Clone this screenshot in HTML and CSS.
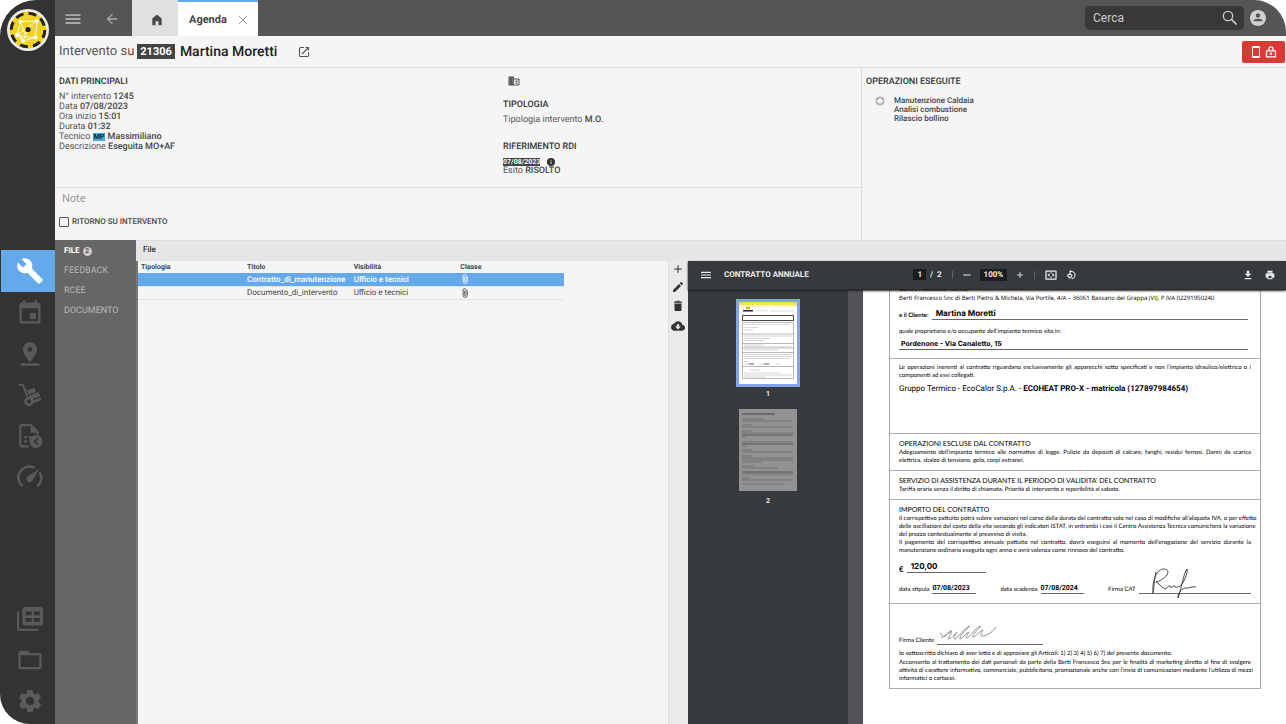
FILE: index.html
```html
<!DOCTYPE html>
<html lang="it">
<head>
<meta charset="utf-8">
<meta name="viewport" content="width=device-width, initial-scale=1">
<title>Agenda - Intervento 21306</title>
<link rel="stylesheet" href="styles.css">
</head>
<body>
<svg class="sprite" aria-hidden="true">
  <symbol id="i-wrench" viewBox="0 0 24 24"><path d="M22.7 19l-9.1-9.1c.9-2.3.4-5-1.5-6.9-2-2-5-2.4-7.4-1.3L9 6 6 9 1.6 4.7C.4 7.1.9 10.1 2.9 12.1c1.9 1.9 4.6 2.4 6.9 1.5l9.1 9.1c.4.4 1 .4 1.4 0l2.3-2.3c.5-.4.5-1.1.1-1.4z"/></symbol>
  <symbol id="i-event" viewBox="0 0 24 24"><path d="M17 12h-5v5h5v-5zM16 1v2H8V1H6v2H5c-1.11 0-1.99.9-1.99 2L3 19c0 1.1.89 2 2 2h14c1.1 0 2-.9 2-2V5c0-1.1-.9-2-2-2h-1V1h-2zm3 18H5V8h14v11z"/></symbol>
  <symbol id="i-pin" viewBox="0 0 24 24"><path d="M18 8c0-3.31-2.69-6-6-6S6 4.69 6 8c0 4.5 6 11 6 11s6-6.5 6-11zm-8 0c0-1.1.9-2 2-2s2 .9 2 2-.89 2-2 2c-1.1 0-2-.9-2-2zM4 20v2h16v-2z"/></symbol>
  <symbol id="i-trolley" viewBox="0 0 24 24"><path d="M1 2h4l4.500 12" fill="none" stroke="currentColor" stroke-width="2"/><circle cx="11" cy="18.500" r="3.400" fill="none" stroke="currentColor" stroke-width="2.500"/><path d="M9 7.500l7.300-2.700 1.500 4.200-7.300 2.700zM11.200 12.600l9.400-3.500 1.500 4.200-8 2.900c-.5-.9-1.200-1.500-2-2zM15.200 17.300l7.200-2.600.9 2.600-7.800 2.800z"/></symbol>
  <symbol id="i-doc" viewBox="0 0 24 24"><path d="M11 21.500H5a2 2 0 0 1-2-2V4a2 2 0 0 1 2-2H13l6 6v2.500" fill="none" stroke="currentColor" stroke-width="2"/><path d="M12.500 1.500l7.500 7.500h-7.500zM6.500 12h3v2h-3zM6.500 16h3v2h-3zM11 12h2v2h-2z"/><circle cx="17.500" cy="17" r="6"/><path d="M19.500 14L16 17l3.500 3" fill="none" stroke="#333" stroke-width="1.500"/></symbol>
  <symbol id="i-speed" viewBox="0 0 24 24"><path d="M4.500 20A10.300 10.300 0 0 1 15.500 3M21.300 8.500A10.300 10.300 0 0 1 19.500 20" fill="none" stroke="currentColor" stroke-width="2.300" stroke-linecap="round"/><path d="M20.500 4.500l-6 10.500a3 3 0 1 1-4-4z"/></symbol>
  <symbol id="i-tables" viewBox="0 0 24 24"><path fill-rule="evenodd" d="M7 1h15a2 2 0 0 1 2 2v13a2 2 0 0 1-2 2H7a2 2 0 0 1-2-2V3a2 2 0 0 1 2-2zm1 4v3.500h5.500V5zm7.500 0v3.500H21V5zM8 11v3.500h5.500V11zm7.500 0v3.500H21V11z"/><path d="M0 5h2v16h18v2H2a2 2 0 0 1-2-2z"/></symbol>
  <symbol id="i-folder" viewBox="0 0 24 24"><path d="M20 6h-8l-2-2H4c-1.100 0-1.990.9-1.990 2L2 18c0 1.100.9 2 2 2h16c1.100 0 2-.9 2-2V8c0-1.100-.9-2-2-2zm0 12H4V8h16v10z"/></symbol>
  <symbol id="i-gear" viewBox="0 0 24 24"><path d="M19.14 12.94c.04-.3.06-.61.06-.94 0-.32-.02-.64-.07-.94l2.030-1.580c.18-.14.23-.41.12-.61l-1.920-3.320c-.12-.22-.37-.29-.59-.22l-2.390.96c-.5-.38-1.030-.7-1.620-.94l-.36-2.540c-.04-.24-.24-.41-.48-.41h-3.840c-.24 0-.43.17-.47.41l-.36 2.540c-.59.24-1.130.57-1.620.94l-2.390-.96c-.22-.08-.47 0-.59.22L2.740 8.870c-.12.21-.08.47.12.61l2.030 1.580c-.05.3-.09.63-.09.94s.02.64.07.94l-2.030 1.580c-.18.14-.23.41-.12.61l1.920 3.320c.12.22.37.29.59.22l2.390-.96c.5.38 1.030.7 1.620.94l.36 2.540c.05.24.24.41.48.41h3.840c.24 0 .44-.17.47-.41l.36-2.540c.59-.24 1.130-.56 1.620-.94l2.390.96c.22.08.47 0 .59-.22l1.920-3.320c.12-.22.07-.47-.12-.61l-2.010-1.580zM12 15.600c-1.980 0-3.600-1.620-3.600-3.600s1.620-3.600 3.600-3.600 3.600 1.620 3.600 3.600-1.620 3.600-3.600 3.600z"/></symbol>
  <symbol id="i-menu" viewBox="0 0 24 24"><path d="M2 18.500h20v-2.500H2zm0-5.300h20v-2.400H2zM2 5.500V8h20V5.500z"/></symbol>
  <symbol id="i-back" viewBox="0 0 24 24"><path d="M20 11H7.830l5.590-5.590L12 4l-8 8 8 8 1.410-1.410L7.830 13H20z"/></symbol>
  <symbol id="i-home" viewBox="0 0 24 24"><path d="M4 20V9.500L11 3.600q1-.8 2 0l7 5.900V20q0 1-1 1h-4.500v-7h-5v7H5q-1 0-1-1z"/></symbol>
  <symbol id="i-close" viewBox="0 0 24 24"><path d="M4 4l16 16M20 4L4 20" fill="none" stroke="currentColor" stroke-width="2"/></symbol>
  <symbol id="i-search" viewBox="0 0 24 24"><path d="M14.500 14.500L22 22" fill="none" stroke="currentColor" stroke-width="2.300"/><circle cx="9" cy="9" r="7" fill="none" stroke="currentColor" stroke-width="2"/></symbol>
  <symbol id="i-user" viewBox="0 0 24 24"><path d="M12 0C5.400 0 0 5.400 0 12s5.400 12 12 12 12-5.400 12-12S18.600 0 12 0zm0 5c1.900 0 3.400 1.500 3.400 3.400S13.900 11.800 12 11.800 8.600 10.300 8.600 8.400 10.100 5 12 5zm-6.800 12v-1c0-2 4.500-3 6.800-3s6.800 1 6.800 3v1z"/></symbol>
  <symbol id="i-open" viewBox="0 0 24 24"><path d="M12 3H5a2 2 0 0 0-2 2v14a2 2 0 0 0 2 2h14a2 2 0 0 0 2-2v-7M15 3h6v6M21 3L8 16" fill="none" stroke="currentColor" stroke-width="2.200"/></symbol>
  <symbol id="i-phone" viewBox="0 0 24 24"><path fill-rule="evenodd" d="M7 0h10a3 3 0 0 1 3 3v18a3 3 0 0 1-3 3H7a3 3 0 0 1-3-3V3a3 3 0 0 1 3-3zm-1 4v16h12V4z"/></symbol>
  <symbol id="i-lock" viewBox="0 0 24 24"><path d="M3 9.500h18v12H3zM8 9V5.500a4 4 0 0 1 8 0V9" fill="none" stroke="currentColor" stroke-width="2.500" stroke-linejoin="round"/><circle cx="12" cy="15.500" r="2.500"/></symbol>
  <symbol id="i-building" viewBox="0 0 24 24"><path d="M1 3h11v18H1z"/><path d="M12 8h10v12H12" fill="none" stroke="currentColor" stroke-width="2"/><path d="M15 11h4v2.500h-4zM15 15h4v2.500h-4z"/><path d="M3 7.500h2M8 7.500h2M3 12h2M8 12h2M3 16.500h2M8 16.500h2" stroke="#bbb" stroke-width="1.500"/></symbol>
  <symbol id="i-info" viewBox="0 0 24 24"><circle cx="12" cy="12" r="12"/><path d="M10.500 10.500h3V18h-3zM10.500 5.500h3v3h-3z" fill="#ddd"/></symbol>
  <symbol id="i-target" viewBox="0 0 24 24"><circle cx="12" cy="12" r="8.500" fill="none" stroke="currentColor" stroke-width="5"/><path d="M12 0v8M12 16v8M0 12h8M16 12h8" stroke="#f5f5f5" stroke-width="1.500"/></symbol>
  <symbol id="i-clip" viewBox="0 0 24 24"><path d="M17.500 6v11.500a5 5 0 0 1-10 0V5a3.500 3.500 0 0 1 7 0v11a2 2 0 0 1-4 0V7" fill="none" stroke="currentColor" stroke-width="2"/></symbol>
  <symbol id="i-plus" viewBox="0 0 24 24"><path d="M12 3v18M3 12h18" stroke="currentColor" stroke-width="2.500"/></symbol>
  <symbol id="i-minus" viewBox="0 0 24 24"><path d="M1 12h22" stroke="currentColor" stroke-width="3"/></symbol>
  <symbol id="i-edit" viewBox="0 0 24 24"><path d="M2 18v4h4L18 10l-4-4zM21.500 6.500c.6-.6.6-1.400 0-2l-2-2c-.6-.6-1.400-.6-2 0l-2 2 4 4z"/></symbol>
  <symbol id="i-trash" viewBox="0 0 24 24"><path d="M5 20c0 1.100.9 2 2 2h10c1.100 0 2-.9 2-2V7H5zM20 3h-4.500l-1-1.500h-5L8.500 3H4v2.500h16z"/></symbol>
  <symbol id="i-cloud" viewBox="0 0 24 24"><path d="M19.350 10.040C18.670 6.590 15.640 4 12 4 9.110 4 6.600 5.640 5.350 8.040 2.340 8.360 0 10.910 0 14c0 3.310 2.690 6 6 6h13c2.760 0 5-2.240 5-5 0-2.640-2.050-4.780-4.650-4.960zM17 13l-5 5-5-5h3V9h4v4h3z"/></symbol>
  <symbol id="i-fit" viewBox="0 0 24 24"><path d="M2 4h20v16H2z" fill="none" stroke="currentColor" stroke-width="2.500" stroke-linejoin="round"/><path d="M5 12l4-4v8zM19 12l-4-4v8zM11 6h2v3h-2zM11 15h2v3h-2z"/></symbol>
  <symbol id="i-rotate" viewBox="0 0 24 24"><path d="M9 8l5.500 5.500L9 19l-5.500-5.500z" fill="none" stroke="currentColor" stroke-width="2.500"/><path d="M10 3.500h3a8.700 8.700 0 0 1 0 17.500" fill="none" stroke="currentColor" stroke-width="2.500"/><path d="M12-1v9L7.500 3.500z"/></symbol>
  <symbol id="i-download" viewBox="0 0 24 24"><path d="M20 9h-5V2H9v7H4l8 8zM4 19v3h16v-3z"/></symbol>
  <symbol id="i-print" viewBox="0 0 24 24"><path fill-rule="evenodd" d="M19 8H5c-2 0-3.500 1.500-3.500 3.500V18H6v4h12v-4h4.500v-6.500C22.500 9.500 21 8 19 8zm-3.500 11.500h-7V14h7zM18 2H6v4.500h12z"/></symbol>
</svg>

<div class="app">
  <nav class="rail" aria-label="Moduli">
    <svg class="logo" viewBox="0 0 42 42" role="img" aria-label="Logo">
      <circle cx="21" cy="21" r="21" fill="#eee"/>
      <circle cx="21" cy="21" r="18.500" fill="#f2d322"/>
      <circle cx="21" cy="21" r="16.800" fill="none" stroke="#222" stroke-width="3" stroke-dasharray="8 5.195"/>
      <path d="M13.500 12.500L30 12 28.500 28.500 16 32 10 26zM10 26L30 12M13.500 12.500L19 28l9.500.5M12 24l4 8 5-12M19 28l-9-2" fill="none" stroke="#fffbe0" stroke-width="1"/>
      <g fill="#fff"><circle cx="13.500" cy="12.500" r="1.800"/><circle cx="30" cy="12" r="1.800"/><circle cx="28.500" cy="28.500" r="2"/><circle cx="16" cy="32" r="2"/><circle cx="10" cy="26" r="2"/></g>
      <circle cx="21" cy="20.500" r="2.600" fill="#222"/>
    </svg>
    <div class="rail-group">
      <button class="rail-btn active" aria-label="Interventi"><svg class="ic28"><use href="#i-wrench"/></svg></button>
      <button class="rail-btn" aria-label="Agenda"><svg class="ic28"><use href="#i-event"/></svg></button>
      <button class="rail-btn" aria-label="Mappa"><svg class="ic28"><use href="#i-pin"/></svg></button>
      <button class="rail-btn" aria-label="Magazzino"><svg class="ic24"><use href="#i-trolley"/></svg></button>
      <button class="rail-btn" aria-label="Scadenze"><svg class="ic26"><use href="#i-doc"/></svg></button>
      <button class="rail-btn" aria-label="Statistiche"><svg class="ic26"><use href="#i-speed"/></svg></button>
    </div>
    <div class="rail-group rail-bottom">
      <button class="rail-btn" aria-label="Tabelle"><svg class="ic26"><use href="#i-tables"/></svg></button>
      <button class="rail-btn" aria-label="Archivio"><svg class="ic28"><use href="#i-folder"/></svg></button>
      <button class="rail-btn" aria-label="Impostazioni"><svg class="ic28"><use href="#i-gear"/></svg></button>
    </div>
  </nav>

  <div class="main">
    <header class="topbar">
      <button class="top-btn" aria-label="Menu"><svg class="ic18"><use href="#i-menu"/></svg></button>
      <button class="top-btn back" aria-label="Indietro"><svg class="ic16"><use href="#i-back"/></svg></button>
      <button class="tab-home" aria-label="Home"><svg class="ic14"><use href="#i-home"/></svg></button>
      <div class="tab-active"><a href="#">Agenda</a><button class="plain" aria-label="Chiudi"><svg class="ic12"><use href="#i-close"/></svg></button></div>
      <label class="search"><input type="text" placeholder="Cerca" aria-label="Cerca"><svg class="ic16"><use href="#i-search"/></svg></label>
      <button class="user" aria-label="Profilo"><svg class="ic16"><use href="#i-user"/></svg></button>
    </header>

    <div class="titlebar">
      <h1><span class="light">Intervento su</span><span class="code">21306</span><span class="name">Martina Moretti</span></h1>
      <button class="plain open" aria-label="Apri"><svg class="ic12"><use href="#i-open"/></svg></button>
      <button class="red-btn" aria-label="Blocca"><svg class="ic12"><use href="#i-phone"/></svg><svg class="ic12"><use href="#i-lock"/></svg></button>
    </div>

    <div class="info">
      <div class="info-left">
        <div class="data">
          <section>
            <h2>DATI PRINCIPALI</h2>
            <p>N° intervento <b>1245</b></p>
            <p>Data <b>07/08/2023</b></p>
            <p>Ora inizio <b>15:01</b></p>
            <p>Durata <b>01:32</b></p>
            <p>Tecnico <span class="mp">MP</span> <b>Massimiliano</b></p>
            <p>Descrizione <b>Eseguita MO+AF</b></p>
          </section>
          <section>
            <svg class="ic12 building"><use href="#i-building"/></svg>
            <h2>TIPOLOGIA</h2>
            <p>Tipologia intervento <b>M.O.</b></p>
            <h2 class="rdi">RIFERIMENTO RDI</h2>
            <p class="rdi-line"><span class="date">07/08/2023</span><svg class="ic8"><use href="#i-info"/></svg></p>
            <p>Esito <b>RISOLTO</b></p>
          </section>
        </div>
        <div class="notes">
          <input class="note" type="text" placeholder="Note" aria-label="Note">
          <label class="check"><input type="checkbox">RITORNO SU INTERVENTO</label>
        </div>
      </div>
      <section class="ops">
        <h2>OPERAZIONI ESEGUITE</h2>
        <div class="ops-row">
          <svg class="ic10"><use href="#i-target"/></svg>
          <ul><li>Manutenzione Caldaia</li><li>Analisi combustione</li><li>Rilascio bollino</li></ul>
        </div>
      </section>
    </div>

    <div class="lower">
      <nav class="side" aria-label="Sezioni">
        <a class="current" href="#">FILE <span class="count">2</span></a>
        <a href="#">FEEDBACK</a>
        <a href="#">RCEE</a>
        <a href="#">DOCUMENTO</a>
      </nav>
      <div class="work">
        <h2 class="strip">File</h2>
        <div class="split">
          <div class="files">
            <table>
              <thead><tr><th>Tipologia</th><th>Titolo</th><th>Visibilità</th><th>Classe</th></tr></thead>
              <tbody>
                <tr class="selected"><td></td><td>Contratto_di_manutenzione</td><td>Ufficio e tecnici</td><td><svg class="ic10"><use href="#i-clip"/></svg></td></tr>
                <tr><td></td><td>Documento_di_intervento</td><td>Ufficio e tecnici</td><td><svg class="ic10"><use href="#i-clip"/></svg></td></tr>
              </tbody>
            </table>
          </div>
          <div class="tools">
            <button class="plain" aria-label="Aggiungi"><svg class="ic10"><use href="#i-plus"/></svg></button>
            <button class="plain" aria-label="Modifica"><svg class="ic12"><use href="#i-edit"/></svg></button>
            <button class="plain" aria-label="Elimina"><svg class="ic12"><use href="#i-trash"/></svg></button>
            <button class="plain" aria-label="Scarica"><svg class="ic14"><use href="#i-cloud"/></svg></button>
          </div>
          <div class="viewer">
            <div class="pdfbar">
              <button class="plain" aria-label="Miniature"><svg class="ic12"><use href="#i-menu"/></svg></button>
              <span class="pdf-title">CONTRATTO ANNUALE</span>
              <div class="pdf-mid">
                <span><span class="box">1</span>&nbsp; / &nbsp;2</span>
                <i class="sep"></i>
                <button class="plain" aria-label="Riduci"><svg class="ic8"><use href="#i-minus"/></svg></button>
                <span class="box">100%</span>
                <button class="plain" aria-label="Ingrandisci"><svg class="ic8"><use href="#i-plus"/></svg></button>
                <i class="sep"></i>
                <button class="plain" aria-label="Adatta"><svg class="ic12"><use href="#i-fit"/></svg></button>
                <button class="plain" aria-label="Ruota"><svg class="ic10"><use href="#i-rotate"/></svg></button>
              </div>
              <div class="pdf-end">
                <button class="plain" aria-label="Scarica PDF"><svg class="ic10"><use href="#i-download"/></svg></button>
                <button class="plain" aria-label="Stampa"><svg class="ic10"><use href="#i-print"/></svg></button>
              </div>
            </div>
            <div class="pdfbody">
              <div class="thumbs">
                <figure class="first">
                  <svg viewBox="0 0 64 88" aria-hidden="true">
                    <path fill="#fff" d="M3 3h58v82H3z"/><path fill="#f3e64b" d="M3 3h58v3H3z"/><path fill="#faf6b8" d="M3 6h58v2H3z"/>
                    <path fill="#c9b800" d="M10 8h4v2h-4z"/><path fill="#222" d="M7 11h10v1.500H7z"/><path d="M20 11.700h12M34 12h24" stroke="#ccc" stroke-width=".7"/>
                    <path d="M6.500 16.500h51v5h-51z" fill="none" stroke="#444"/>
                    <path d="M6.500 23.500h51v56h-51zM6.500 35h51M6.500 44.500h51M6.500 49h51M6.500 53.500h51M6.500 67.500h51" fill="none" stroke="#888" stroke-width=".6"/>
                    <path d="M8 25.500h46M8 28.500h14M8 31h9M8 37h48M8 39.500h26M8 41.500h20M8 46h20M8 47.700h48M8 51h34M8 55.500h48M8 57.500h48M8 59.500h46M8 62.500h4M8 65h10M23 65h11M40 65h4M14 71h10M8 74h36M8 76h48M8 78h22" stroke="#bbb" stroke-width=".6"/>
                    <path d="M13 65h5M28 65h5" stroke="#444" stroke-width=".7"/>
                  </svg>
                  <figcaption>1</figcaption>
                </figure>
                <figure>
                  <svg viewBox="0 0 58 82" aria-hidden="true">
                    <path fill="#929292" d="M0 0h58v82H0z"/><path d="M3 5h33" stroke="#444" stroke-width="1.200"/>
                    <path d="M3 10h22M3 12h50M3 16h10M3 18h51M3 22h10M3 24h51M3 26h51M3 28h4M3 33h51M3 35h51M3 37h4M3 41h10M3 43h51M3 47h10M3 49h51M3 51h51M3 53h20M3 57h12M3 59h36M3 63h51M3 65h51M3 69h8M3 71h51M3 75h42" stroke="#707070" stroke-width=".9"/>
                    <path d="M3 26h50M3 35h51M3 63h51" stroke="#5c5c5c" stroke-width=".7"/>
                  </svg>
                  <figcaption>2</figcaption>
                </figure>
              </div>
              <div class="gutter"></div>
              <article class="page">
                <div class="sheet">
                  <section class="s1">
                    <p class="strong">Centro Assistenza Tecnica</p>
                    <p class="berti">Berti Francesco Snc di Berti Pietro &amp; Michela, Via Portile, 4/A – 36061 Bassano del Grappa (VI), P.IVA 02291950240</p>
                    <div class="fill client"><span class="strong">e il Cliente:</span><span class="val big">Martina Moretti</span></div>
                    <p>quale proprietario e/o occupante dell’impianto termico sito in:</p>
                    <div class="fill addr"><span class="val">Pordenone - Via Canaletto, 15</span></div>
                  </section>
                  <section class="s2">
                    <p class="full">Le operazioni inerenti al contratto riguardano esclusivamente gli apparecchi sotto specificati e non l’impianto idraulico/elettrico o i</p>
                    <p>componenti ad essi collegati.</p>
                    <p class="group">Gruppo Termico - EcoCalor S.p.A. - <b>ECOHEAT PRO-X - matricola (127897984654)</b></p>
                  </section>
                  <section class="s3">
                    <h3>OPERAZIONI ESCLUSE DAL CONTRATTO</h3>
                    <p class="full">Adeguamento dell’impianto termico alle normative di legge. Pulizie da depositi di calcare, fanghi, residui ferrosi. Danni da scarica</p>
                    <p>elettrica, sbalzo di tensione, gelo, corpi estranei.</p>
                  </section>
                  <section class="s4">
                    <h3>SERVIZIO DI ASSISTENZA DURANTE IL PERIODO DI VALIDITA’ DEL CONTRATTO</h3>
                    <p>Tariffa oraria senza il diritto di chiamata. Priorità di intervento e reperibilità al sabato.</p>
                  </section>
                  <section class="s5">
                    <h3>IMPORTO DEL CONTRATTO</h3>
                    <p class="full">Il corrispettivo pattuito potrà subire variazioni nel corso della durata del contratto solo nel caso di modifiche all’aliquota IVA, o per effetto</p>
                    <p class="full">delle oscillazioni del costo della vita secondo gli indicatori ISTAT, in entrambi i casi il Centro Assistenza Tecnica comunicherà la variazione</p>
                    <p>del prezzo contestualmente al preavviso di visita.</p>
                    <p class="full">Il pagamento del corrispettivo annuale pattuito nel contratto, dovrà eseguirsi al momento dell’erogazione del servizio durante la</p>
                    <p>manutenzione ordinaria eseguita ogni anno e avrà valenza come rinnovo del contratto.</p>
                    <div class="fill euro"><span class="sym">€</span><span class="val big">120,00</span></div>
                    <div class="dates">
                      <div class="fill"><span>data stipula</span><span class="val">07/08/2023</span></div>
                      <div class="fill"><span>data scadenza</span><span class="val">07/08/2024</span></div>
                      <div class="fill cat"><span>Firma CAT</span><span class="val"><svg class="sign-cat" viewBox="0 0 48 32" aria-hidden="true"><path d="M5 5C3 14 3 22 2 26C1 12 6 2 13 2C22 3 14 13 5 15C9 17 11 21 14 22C17 21 17 18 19 19C19 23 22 18 24 19C24 22 27 19 28 20C33 16 37 6 36 2C33 4 30 24 27 31C26 29 30 21 34 21C37 22 40 19 45 20" fill="none" stroke="#333" stroke-width=".9"/></svg></span></div>
                    </div>
                  </section>
                  <section class="s6">
                    <div class="fill customer"><span>Firma Cliente</span><span class="val"><svg class="sign-cust" viewBox="0 0 58 18" aria-hidden="true"><path d="M1 7l4 4 7-7M2 12l11-7-4 8c3 0 6-4 9-7-3 4-4 7-2 7 3-1 9-11 15-13-5 4-11 11-10 13 4-2 6-6 9-7-2 3-4 6-2 6 3-1 9-11 14-12-4 4-10 11-8 11 4-1 6-6 10-7-2 3-4 7 0 6 6-1 10-5 13-9" fill="none" stroke="#888" stroke-width=".9"/></svg></span></div>
                    <p class="io">Io sottoscritto dichiaro di aver letto e di approvare gli Articoli: 1) 2) 3) 4) 5) 6) 7) del presente documento.</p>
                    <p class="full">Acconsento al trattamento dei dati personali da parte della Berti Francesco Snc per le finalità di marketing diretto al fine di svolgere</p>
                    <p class="full">attività di carattere informativo, commerciale, pubblicitario, promozionale anche con l’invio di comunicazioni mediante l’utilizzo di mezzi</p>
                    <p>informatici o cartacei.</p>
                  </section>
                </div>
              </article>
            </div>
          </div>
        </div>
      </div>
    </div>
  </div>
</div>
</body>
</html>
```
FILE: styles.css
```css
* { box-sizing: border-box; }
body { margin: 0; background: #fff; color: #333; font: 9px/10px Roboto, "Liberation Sans", sans-serif; text-rendering: geometricPrecision; }
h1, h2, h3, p, ul, figure { margin: 0; padding: 0; }
ul { list-style: none; }
a { color: inherit; text-decoration: none; }
b { font-weight: 500; }
svg { display: block; flex: none; fill: currentColor; }
button { font: inherit; color: inherit; border: 0; padding: 0; background: none; cursor: pointer; }
input { font: inherit; color: inherit; }
.plain { display: flex; align-items: center; justify-content: center; }
.sprite { position: absolute; width: 0; height: 0; }
.ic8 { width: 8px; height: 8px; }
.ic10 { width: 10px; height: 10px; }
.ic12 { width: 12px; height: 12px; }
.ic14 { width: 14px; height: 14px; }
.ic16 { width: 16px; height: 16px; }
.ic18 { width: 18px; height: 18px; }
.ic24 { width: 24px; height: 24px; }
.ic26 { width: 26px; height: 26px; }
.ic28 { width: 28px; height: 28px; }

.app { display: flex; min-height: 100vh; background: #f5f5f5; border-radius: 36px 32px 0 30px; overflow: hidden; }

/* Left rail */
.rail { flex: none; width: 55px; background: #333; display: flex; flex-direction: column; padding-bottom: 3px; }
.logo { width: 42px; height: 42px; margin: 9px 0 0 7px; }
.rail-group { display: flex; flex-direction: column; margin-top: 199px; }
.rail-bottom { margin-top: auto; }
.rail-btn { height: 41px; color: #5a5a5a; display: flex; align-items: center; justify-content: center; padding-left: 5px; }
.rail-btn.active { background: #64aaeb; color: #fff; margin-left: 1px; height: 42px; padding-left: 3px; }

.main { flex: 1; min-width: 0; display: flex; flex-direction: column; }

/* Top bar */
.topbar { height: 36px; background: #555; display: flex; align-items: center; color: #aaa; }
.top-btn { display: flex; align-items: center; padding: 2px 0 0 9px; }
.top-btn.back { padding-left: 22px; }
.tab-home { align-self: stretch; width: 46px; margin-left: 12px; background: #e0e0e0; color: #484848; display: flex; align-items: center; justify-content: center; padding: 4px 0 0 3px; }
.tab-active { align-self: stretch; width: 80px; background: #fff; border-top: 2px solid #64aaeb; color: #444; font-size: 11px; font-weight: 700; display: flex; align-items: center; gap: 10px; padding: 2px 0 0 11px; }
.tab-active .plain { color: #999; }
.search { margin-left: auto; width: 159px; height: 24px; background: #383838; border-radius: 5px; display: flex; align-items: center; padding: 0 6px 0 8px; color: #ccc; }
.search input { flex: 1; min-width: 0; border: 0; padding: 0; background: none; outline: 0; font-size: 12px; }
.search input::placeholder { color: #ccc; opacity: 1; }
.user { margin: 0 20px 0 6px; color: #d0d0d0; }

/* Title */
.titlebar { height: 32px; border-bottom: 1px solid #ddd; display: flex; align-items: center; padding: 0 1px 0 4px; }
h1 { font-size: 14px; line-height: 18px; font-weight: 500; color: #222; white-space: nowrap; display: flex; align-items: center; }
.light { font-size: 13px; font-weight: 400; color: #555; }
.code { background: #444; color: #fff; font-size: 11px; line-height: 15px; font-weight: 700; padding: 0 3px; margin: 0 5px 0 3px; }
.open { margin-left: 21px; color: #555; }
.red-btn { margin-left: auto; width: 43px; height: 22px; background: #d63c34; border-radius: 2px; color: #fff; display: flex; align-items: center; justify-content: center; gap: 3px; }

/* Info panels */
.info { display: grid; grid-template-columns: 807fr 424fr; height: 172px; color: #555; }
.info-left { display: flex; flex-direction: column; border-right: 1px solid #ddd; }
.data { display: grid; grid-template-columns: 444fr 358fr; height: 120px; border-bottom: 1px solid #ddd; padding: 9px 0 0 4px; }
h2 { font-size: 9px; line-height: 10px; font-weight: 500; color: #333; margin-bottom: 5px; }
b, li { font-weight: 500; color: #444; }
.mp { display: inline-block; background: #43aede; color: #123; font-size: 7px; line-height: 8px; font-weight: 700; padding: 0 1px; }
.building { margin: -2px 0 13px 5px; color: #555; }
.rdi { margin-top: 17px; margin-bottom: 6px; }
.rdi-line { display: flex; align-items: center; gap: 7px; color: #333; }
.date { background: #444; color: #fff; font-size: 7px; line-height: 8px; font-weight: 700; }
.notes { padding: 4px; }
.note { display: block; width: 100%; border: 0; padding: 0 3px; background: none; font-size: 11px; line-height: 14px; height: 14px; outline: 0; }
.note::placeholder { color: #999; opacity: 1; }
.check { display: flex; align-items: center; gap: 3px; margin-top: 11px; font-size: 8px; font-weight: 500; color: #444; }
.check input { appearance: none; width: 10px; height: 10px; border: 1px solid #555; border-radius: 1px; margin: 0; }
.ops { padding: 9px 4px; }
.ops-row { display: flex; gap: 9px; padding: 4px 0 0 9px; font-size: 8px; line-height: 9px; color: #aaa; }

/* Lower area */
.lower { flex: 1; display: flex; }
.side { flex: none; width: 81px; background: #666; color: #b8b8b8; padding-top: 1px; }
.side a { display: flex; align-items: center; gap: 1px; height: 20px; padding-left: 9px; }
.side .current { color: #fff; font-weight: 700; font-size: 8px; gap: 3px; }
.count { background: #ccc; color: #555; border-radius: 50%; width: 9px; height: 9px; font-size: 7px; line-height: 9px; text-align: center; }
.work { flex: 1; min-width: 0; display: flex; flex-direction: column; }
.strip { background: #e6e6e6; border-top: 1px solid #ddd; height: 21px; margin: 0; padding: 4px 7px; font-size: 8px; }
.split { flex: 1; display: flex; border-left: 2px solid #777; }
.files { flex: 530 1 0; min-width: 0; }
table { width: 426px; border-collapse: collapse; table-layout: fixed; font-size: 8px; line-height: 9px; color: #444; }
th, td { height: 13px; padding: 0 3px; text-align: left; white-space: nowrap; }
th { font-size: 7px; font-weight: 700; height: 12px; }
th:first-child { width: 106px; }
tbody tr { border-bottom: 1px solid #e4e4e4; }
.selected { background: #64aaeb; color: #fff; font-weight: 500; }
.tools { flex: none; width: 20px; background: #eaeaea; border-left: 1px solid #ddd; display: flex; flex-direction: column; align-items: center; gap: 7px; padding: 3px 2px 0 0; }

/* PDF viewer */
.viewer { flex: 598 1 0; min-width: 0; display: flex; flex-direction: column; background: #36393d; color: #eee; }
.pdfbar { height: 29px; border-bottom: 1px solid #26282a; box-shadow: 0 1px 2px #222; z-index: 1; display: flex; align-items: center; padding: 0 11px 0 12px; font-weight: 700; }
.pdf-title { margin-left: 12px; font-size: 8px; }
.pdf-mid { margin-left: auto; display: flex; align-items: center; gap: 9px; font-size: 8px; padding-right: 62px; }
.box { background: #1b1c1e; padding: 1px 4px; }
.sep { width: 1px; height: 8px; margin: 0 1px; background: #666; }
.pdf-end { margin-left: auto; display: flex; gap: 12px; }
.pdfbody { flex: 1; display: flex; overflow: hidden; }
.thumbs { flex: none; width: 160px; padding-top: 9px; display: flex; flex-direction: column; align-items: center; gap: 10px; font-weight: 700; font-size: 7px; }
.thumbs svg { width: 58px; height: 82px; }
.thumbs .first svg { width: 64px; height: 88px; background: #82a4ee; }
figcaption { text-align: center; margin-top: 2px; }
.thumbs figure + figure figcaption { margin-top: 5px; }
.gutter { flex: none; width: 15px; background: #535457; }
.page { flex: 1; min-width: 0; background: #fff; color: #000; padding: 0 25px 0 26px; font: 6px/8px Lato, "Open Sans", sans-serif; }
.sheet { border: solid #aaa; border-width: 0 1px 1px; }
.sheet section { padding: 5px 9px 5px; }
.sheet section + section { border-top: 1px solid #aaa; }
.sheet p { white-space: nowrap; }
.sheet .full { text-align-last: justify; }
.sheet h3 { font-size: 7px; line-height: 10px; font-weight: 400; white-space: nowrap; }
.strong { font-weight: 700; }
.sheet .s1 { padding-top: 0; padding-bottom: 8px; }
.s1 > p:first-child { margin-top: -4px; }
.sheet .berti { font: 6px/9px "Open Sans", sans-serif; }
.fill { display: flex; align-items: flex-end; gap: 3px; white-space: nowrap; }
.val { flex: 1; border-bottom: 1px solid #666; font: 700 7px/10px Inter, sans-serif; padding-left: 2px; }
.big { font-size: 8px; line-height: 12px; padding-left: 4px; }
.client { margin: 4px 3px 8px 0; }
.addr { margin: 3px 3px 0 0; }
.sheet .s2 { min-height: 75px; }
.sheet .group { font: 8px/12px Roboto, sans-serif; margin-top: 3px; }
.group b { font-weight: 700; color: #000; }
.euro { width: 87px; margin-top: 5px; }
.sym { font-size: 8px; font-weight: 700; }
.dates { display: grid; grid-template-columns: 77px 83px 143px; justify-content: space-between; margin: 10px 0 4px; }
.dates .val { font-family: Roboto, sans-serif; padding-left: 0; }
.cat .val { position: relative; }
.sign-cat { position: absolute; left: 12px; bottom: -6px; width: 48px; height: 32px; }
.customer { width: 144px; margin: 17px 0 5px; }
.sign-cust { width: 58px; height: 18px; }
.io { margin-bottom: 1px; }
```
